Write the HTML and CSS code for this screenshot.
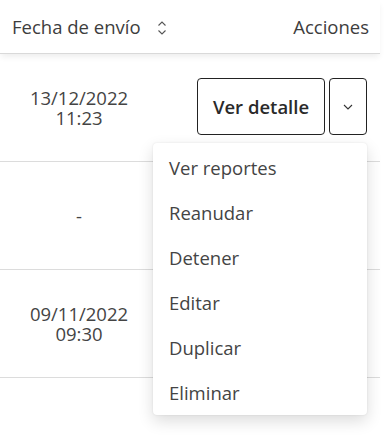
FILE: index.html
```html
<!DOCTYPE html>
<html lang="es">

<head>
  <meta charset="UTF-8">
  <meta name="viewport" content="width=device-width, initial-scale=1.0">
  <title>Envíos</title>
  <link rel="stylesheet" href="styles.css">
</head>

<body>
  <div class="wrap">
    <div class="head">
      <div class="col-fecha">
        Fecha de envío
        <svg class="sort" width="10" height="16" viewBox="0 0 10 16">
          <path d="M1.5 5.5 L5 2 L8.5 5.5 M1.5 10.5 L5 14 L8.5 10.5" fill="none" stroke="#555" stroke-width="1.1"/>
        </svg>
      </div>
      <div class="col-acciones">Acciones</div>
    </div>

    <div class="row">
      <div class="fecha">13/12/2022<br>11:23</div>
      <div class="acciones">
        <button class="btn">Ver detalle</button>
        <button class="btn btn-toggle">
          <svg width="10" height="6" viewBox="0 0 10 6">
            <path d="M1 1 L5 5 L9 1" fill="none" stroke="#333" stroke-width="1.1"/>
          </svg>
        </button>
      </div>
    </div>
    <div class="row">
      <div class="fecha">-</div>
      <div class="acciones"></div>
    </div>
    <div class="row">
      <div class="fecha">09/11/2022<br>09:30</div>
      <div class="acciones"></div>
    </div>

    <ul class="menu">
      <li>Ver reportes</li>
      <li>Reanudar</li>
      <li>Detener</li>
      <li>Editar</li>
      <li>Duplicar</li>
      <li>Eliminar</li>
    </ul>
  </div>
</body>

</html>
```

FILE: styles.css
```css
body {
  margin: 0;
  min-height: 437px;
  font-family: "Open Sans", "Noto Sans", sans-serif;
  color: #444;
  background: #fff;
}
.wrap {
  position: relative;
  width: 380px;
  min-height: 437px;
}
.head {
  display: flex;
  align-items: center;
  justify-content: space-between;
  height: 53px;
  padding: 0 11px 0 12px;
  font-size: 18.5px;
  color: #3d3d3d;
  border-bottom: 1px solid #d9d9d9;
  box-shadow: 0 4px 6px -1px rgba(0, 0, 0, 0.07);
  position: relative;
}
.sort {
  vertical-align: -2px;
  margin-left: 12px;
}
.row {
  display: grid;
  grid-template-columns: 158px 1fr;
  height: 107px;
  border-bottom: 1px solid #dcdcdc;
}
.fecha {
  display: flex;
  align-items: center;
  justify-content: center;
  text-align: center;
  font-size: 18.5px;
  line-height: 20px;
  color: #444;
}
.acciones {
  display: flex;
  align-items: center;
  justify-content: flex-end;
  gap: 4px;
  padding-right: 13px;
  padding-bottom: 2px;
}
.btn {
  height: 57px;
  width: 128px;
  padding: 0;
  border: 1px solid #222;
  border-radius: 4px;
  background: #fff;
  font-family: inherit;
  font-size: 18.5px;
  font-weight: 600;
  color: #2a2a2a;
  cursor: pointer;
}
.btn-toggle {
  width: 38px;
  display: flex;
  align-items: center;
  justify-content: center;
}
.menu {
  position: absolute;
  left: 153px;
  top: 143px;
  width: 214px;
  margin: 0;
  padding: 2px 0 0;
  list-style: none;
  background: #fff;
  border-radius: 4px;
  box-shadow: 0 6px 16px rgba(0, 0, 0, 0.14), 0 0 2px rgba(0, 0, 0, 0.1);
}
.menu li {
  height: 45px;
  line-height: 45px;
  padding-left: 16px;
  font-size: 18.5px;
  color: #444;
  cursor: pointer;
}
```
